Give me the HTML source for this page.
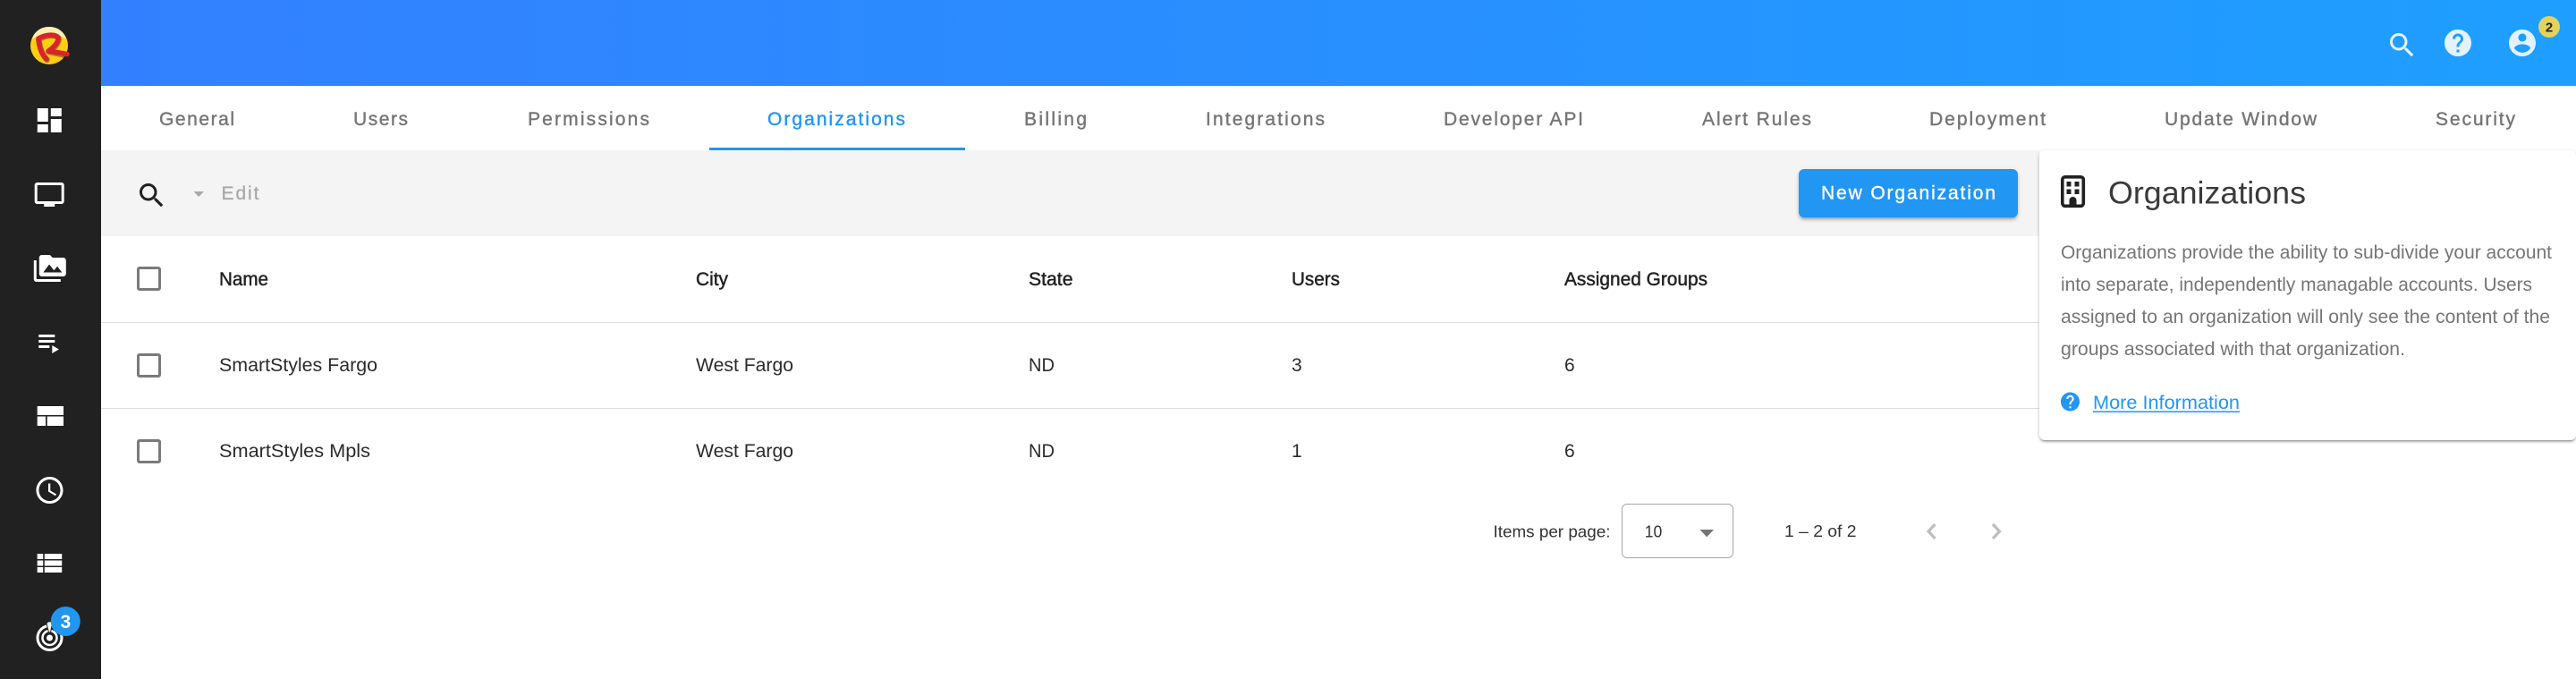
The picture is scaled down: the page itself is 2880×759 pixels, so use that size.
<!DOCTYPE html>
<html lang="en">
<head>
<meta charset="utf-8">
<title>Organizations</title>
<style>
html,body{margin:0;padding:0;width:2880px;height:759px;overflow:hidden;background:#fff;font-family:"Liberation Sans",sans-serif}
.abs{position:absolute}
#side{left:0;top:0;width:113px;height:759px;background:#212121}
#top{left:113px;top:0;width:2767px;height:96px;background:linear-gradient(90deg,#3380ff,#1e9fff)}
#toolbar{left:113px;top:168px;width:2167px;height:96px;background:#f4f4f4}
#ink{left:793px;top:165px;width:286px;height:3px;background:#2196f3}
.line{left:113px;width:2167px;height:1px;background:#dedede}
#btn{left:2011px;top:189px;width:245px;height:54px;border-radius:6px;background:#2196f3;box-shadow:0 3px 2px -2px rgba(0,0,0,.2),0 3px 3px rgba(0,0,0,.14),0 2px 6px rgba(0,0,0,.12)}
#card{left:2280px;top:168px;width:600px;height:324px;border-radius:6px;background:#fff;box-shadow:0 3px 2px -2px rgba(0,0,0,.3),0 2px 3px rgba(0,0,0,.16),0 1px 5px rgba(0,0,0,.12)}
.cb{left:153px;width:21px;height:21px;border:3px solid #7a7a7a;border-radius:3px}
#sel{left:1813px;top:563px;width:123px;height:59px;border:1.5px solid #a6a6a6;border-radius:6px}
svg{position:absolute;left:0;top:0}
text{font-family:"Liberation Sans",sans-serif}
.tab{font-size:21px;fill:#757575;stroke:#757575;stroke-width:.4px}
.th{font-size:21px;fill:#212121;stroke:#212121;stroke-width:.45px}
.td{font-size:21px;fill:#2b2b2b}
.p{font-size:21px;fill:#757575}
.sm{font-size:18px;fill:#333}
</style>
</head>
<body>
<div class="abs" id="side"></div>
<div class="abs" id="top"></div>
<div class="abs" id="toolbar"></div>
<div class="abs" id="ink"></div>
<div class="abs line" style="top:360px"></div>
<div class="abs line" style="top:456px"></div>
<div class="abs cb" style="top:298px"></div>
<div class="abs cb" style="top:395px"></div>
<div class="abs cb" style="top:491px"></div>
<div class="abs" id="btn"></div>
<div class="abs" id="card"></div>
<div class="abs" id="sel"></div>

<svg width="2880" height="759" viewBox="0 0 2880 759" xmlns="http://www.w3.org/2000/svg">
  <!-- logo -->
  <circle cx="55" cy="51" r="21" fill="#ffcd14"/>
  <path d="M36 44C38 35 46 30 55 30C64 30 72 35 74 44C68 38 42 38 36 44Z" fill="#fbeeb0"/>
  <path d="M43 44C44 53 47 61 52 66M43 43C52 38 62 38 65 42C66 47 60 53 54 57L75 61.500" fill="none" stroke="#4a1c14" stroke-width="6.500" stroke-linecap="round" stroke-linejoin="round" opacity=".45" transform="translate(.5,.8)"/>
  <path d="M43 44C44 53 47 61 52 66M43 43C52 38 62 38 65 42C66 47 60 53 54 57L75 60.500" fill="none" stroke="#d8232a" stroke-width="5.500" stroke-linecap="round" stroke-linejoin="round"/>

  <!-- sidebar icons -->
  <g fill="#fff">
    <path transform="translate(37.3,116.5) scale(1.5)" d="M3 13h8V3H3v10zm0 8h8v-6H3v6zm10 0h8V11h-8v10zm0-18v6h8V3h-8z"/>
    <path transform="translate(37.2,199.5) scale(1.5)" d="M21 3H3c-1.1 0-2 .9-2 2v12c0 1.1.9 2 2 2h5v2h8v-2h5c1.1 0 1.99-.9 1.99-2L23 5c0-1.1-.9-2-2-2zm0 14H3V5h18v12z"/>
    <path transform="translate(37.8,282) scale(1.5)" d="M2 6H0v5h.01L0 20c0 1.1.9 2 2 2h18v-2H2V6zm20-2h-8l-2-2H6c-1.1 0-1.99.9-1.99 2L4 16c0 1.1.9 2 2 2h16c1.1 0 2-.9 2-2V6c0-1.1-.9-2-2-2zM7 15l4.5-6 3.5 4.51 2.5-3.01L21 15H7z"/>
    <path transform="translate(37.3,365) scale(1.5)" d="M4 10h12v2H4zm0-4h12v2H4zm0 8h8v2H4zm10 0v6l5-3z"/>
    <path d="M41.7 454H71V464H41.7zM41.7 465.5H51V476H41.7zM52.7 465.5H71V476H52.7z"/>
    <path transform="translate(37.5,530) scale(1.5)" d="M11.99 2C6.47 2 2 6.48 2 12s4.47 10 9.99 10C17.52 22 22 17.52 22 12S17.52 2 11.99 2zM12 20c-4.42 0-8-3.58-8-8s3.58-8 8-8 8 3.58 8 8-3.58 8-8 8zM12.5 7H11v6l5.25 3.15.75-1.23-4.5-2.67z"/>
    <path transform="translate(35.2,611.5) scale(1.62,1.5)" d="M4 14h4v-4H4v4zm0 5h4v-4H4v4zm0-10h4V5H4v4zm5 5h12v-4H9v4zm0 5h12v-4H9v4zM9 5v4h12V5H9z"/>
  </g>
  <circle cx="55.5" cy="713" r="13.5" fill="none" stroke="#fff" stroke-width="3"/>
  <circle cx="55.5" cy="713" r="8" fill="none" stroke="#fff" stroke-width="2.5"/>
  <circle cx="55.5" cy="713" r="3.5" fill="#fff"/>
  <path d="M52 697C53 694 58 694 58.500 697L56.500 707H54.500Z" fill="#fff" stroke="#212121" stroke-width="1"/>
  <circle cx="73.300" cy="694.500" r="16.500" fill="#2196f3"/>
  <text x="73.300" y="702" text-anchor="middle" font-size="21" font-weight="700" fill="#fff">3</text>

  <!-- header icons -->
  <g fill="#e3f2fd">
    <path transform="translate(2667.5,32.5) scale(1.5)" d="M15.5 14h-.79l-.28-.27A6.471 6.471 0 0 0 16 9.5 6.5 6.5 0 1 0 9.5 16c1.61 0 3.09-.59 4.23-1.57l.27.28v.79l5 4.99L20.49 19l-4.99-5zm-6 0C7.01 14 5 11.99 5 9.5S7.01 5 9.5 5 14 7.01 14 9.5 11.99 14 9.5 14z"/>
    <path transform="translate(2730,30) scale(1.5)" d="M12 2C6.48 2 2 6.48 2 12s4.48 10 10 10 10-4.48 10-10S17.52 2 12 2zm1 17h-2v-2h2v2zm2.07-7.75l-.9.92C13.45 12.9 13 13.5 13 15h-2v-.5c0-1.1.45-2.1 1.17-2.83l1.24-1.26c.37-.36.59-.86.59-1.41 0-1.1-.9-2-2-2s-2 .9-2 2H8c0-2.21 1.79-4 4-4s4 1.79 4 4c0 .88-.36 1.68-.93 2.25z"/>
    <path transform="translate(2802,30) scale(1.5)" d="M12 2C6.48 2 2 6.48 2 12s4.48 10 10 10 10-4.48 10-10S17.52 2 12 2zm0 3c1.66 0 3 1.34 3 3s-1.34 3-3 3-3-1.34-3-3 1.34-3 3-3zm0 14.2c-2.5 0-4.71-1.28-6-3.22.03-1.99 4-3.08 6-3.08 1.99 0 5.97 1.09 6 3.08-1.29 1.94-3.5 3.22-6 3.22z"/>
  </g>
  <circle cx="2850" cy="30" r="12" fill="#e3d35c"/>
  <text x="2850" y="35.500" text-anchor="middle" font-size="15" font-weight="700" fill="#212121">2</text>

  <!-- tabs -->
  <text class="tab" x="178" y="140" textLength="84" lengthAdjust="spacing">General</text>
  <text class="tab" x="395" y="140" textLength="61" lengthAdjust="spacing">Users</text>
  <text class="tab" x="590" y="140" textLength="136" lengthAdjust="spacing">Permissions</text>
  <text class="tab" x="858" y="140" textLength="154" lengthAdjust="spacing" style="fill:#2196f3;stroke:#2196f3">Organizations</text>
  <text class="tab" x="1145" y="140" textLength="70" lengthAdjust="spacing">Billing</text>
  <text class="tab" x="1348" y="140" textLength="133" lengthAdjust="spacing">Integrations</text>
  <text class="tab" x="1614" y="140" textLength="156" lengthAdjust="spacing">Developer API</text>
  <text class="tab" x="1903" y="140" textLength="122" lengthAdjust="spacing">Alert Rules</text>
  <text class="tab" x="2157" y="140" textLength="130" lengthAdjust="spacing">Deployment</text>
  <text class="tab" x="2420" y="140" textLength="170" lengthAdjust="spacing">Update Window</text>
  <text class="tab" x="2723" y="140" textLength="89" lengthAdjust="spacing">Security</text>

  <!-- toolbar -->
  <path fill="#212121" transform="translate(151.5,200.5) scale(1.5)" d="M15.5 14h-.79l-.28-.27A6.471 6.471 0 0 0 16 9.5 6.5 6.5 0 1 0 9.5 16c1.61 0 3.09-.59 4.23-1.57l.27.28v.79l5 4.99L20.49 19l-4.99-5zm-6 0C7.01 14 5 11.99 5 9.5S7.01 5 9.5 5 14 7.01 14 9.5 11.99 14 9.5 14z"/>
  <path fill="#a8a8a8" d="M216.500 214H228L222.200 220Z"/>
  <text x="247.500" y="223" font-size="21" fill="#a8a8a8" stroke="#a8a8a8" stroke-width=".25" textLength="42" lengthAdjust="spacing">Edit</text>
  <text x="2036" y="222.700" font-size="21" fill="#fff" stroke="#fff" stroke-width=".4" textLength="195" lengthAdjust="spacing">New Organization</text>

  <!-- table -->
  <text class="th" x="245" y="319" textLength="55" lengthAdjust="spacingAndGlyphs">Name</text>
  <text class="th" x="778" y="319" textLength="36" lengthAdjust="spacingAndGlyphs">City</text>
  <text class="th" x="1150" y="319" textLength="49.500" lengthAdjust="spacingAndGlyphs">State</text>
  <text class="th" x="1444" y="319" textLength="54" lengthAdjust="spacingAndGlyphs">Users</text>
  <text class="th" x="1749" y="319" textLength="160" lengthAdjust="spacingAndGlyphs">Assigned Groups</text>

  <text class="td" x="245" y="415" textLength="177" lengthAdjust="spacingAndGlyphs">SmartStyles Fargo</text>
  <text class="td" x="778" y="415" textLength="109" lengthAdjust="spacingAndGlyphs">West Fargo</text>
  <text class="td" x="1150" y="415" textLength="29" lengthAdjust="spacingAndGlyphs">ND</text>
  <text class="td" x="1444" y="415">3</text>
  <text class="td" x="1749" y="415">6</text>

  <text class="td" x="245" y="511" textLength="169" lengthAdjust="spacingAndGlyphs">SmartStyles Mpls</text>
  <text class="td" x="778" y="511" textLength="109" lengthAdjust="spacingAndGlyphs">West Fargo</text>
  <text class="td" x="1150" y="511" textLength="29" lengthAdjust="spacingAndGlyphs">ND</text>
  <text class="td" x="1444" y="511">1</text>
  <text class="td" x="1749" y="511">6</text>

  <!-- pagination -->
  <text class="sm" x="1669.500" y="600.700" textLength="131" lengthAdjust="spacingAndGlyphs">Items per page:</text>
  <text class="sm" x="1838.800" y="600.700" textLength="19.500" lengthAdjust="spacingAndGlyphs">10</text>
  <path fill="#757575" d="M1900.500 592H1916L1908.200 600.300Z"/>
  <text class="sm" x="1995" y="600" textLength="80.500" lengthAdjust="spacingAndGlyphs">1 – 2 of 2</text>
  <path d="M2163.500 586L2156 594L2163.500 602" fill="none" stroke="#bdbdbd" stroke-width="3.200"/>
  <path d="M2228 586L2235.500 594L2228 602" fill="none" stroke="#bdbdbd" stroke-width="3.200"/>

  <!-- help card -->
  <rect x="2305.800" y="197.800" width="23.500" height="32.500" rx="3" fill="#fff" stroke="#212121" stroke-width="3.600"/>
  <path fill="#212121" d="M2310.500 203h5v5.500h-5zM2319.500 203h5v5.500h-5zM2310.500 211.500h5v5.500h-5zM2319.500 211.500h5v5.500h-5zM2313.500 232v-8a4 4 0 0 1 8 0V232z"/>
  <text x="2357" y="227.700" font-size="35" fill="#3a3a3a" textLength="221" lengthAdjust="spacingAndGlyphs">Organizations</text>
  <text class="p" x="2304" y="289" textLength="549" lengthAdjust="spacingAndGlyphs">Organizations provide the ability to sub-divide your account</text>
  <text class="p" x="2304" y="325" textLength="527" lengthAdjust="spacingAndGlyphs">into separate, independently managable accounts. Users</text>
  <text class="p" x="2304" y="361" textLength="547" lengthAdjust="spacingAndGlyphs">assigned to an organization will only see the content of the</text>
  <text class="p" x="2304" y="397" textLength="385" lengthAdjust="spacingAndGlyphs">groups associated with that organization.</text>
  <path fill="#2196f3" transform="translate(2301.900,436.400) scale(1.05)" d="M12 2C6.48 2 2 6.48 2 12s4.48 10 10 10 10-4.48 10-10S17.52 2 12 2zm1 17h-2v-2h2v2zm2.07-7.75l-.9.92C13.45 12.9 13 13.5 13 15h-2v-.5c0-1.1.45-2.1 1.17-2.83l1.24-1.26c.37-.36.59-.86.59-1.41 0-1.1-.9-2-2-2s-2 .9-2 2H8c0-2.21 1.79-4 4-4s4 1.79 4 4c0 .88-.36 1.68-.93 2.25z"/>
  <text x="2340" y="457" font-size="21" fill="#2196f3" textLength="164" lengthAdjust="spacingAndGlyphs">More Information</text>
  <rect x="2340" y="459.500" width="164" height="1.500" fill="#2196f3"/>
</svg>
</body>
</html>
